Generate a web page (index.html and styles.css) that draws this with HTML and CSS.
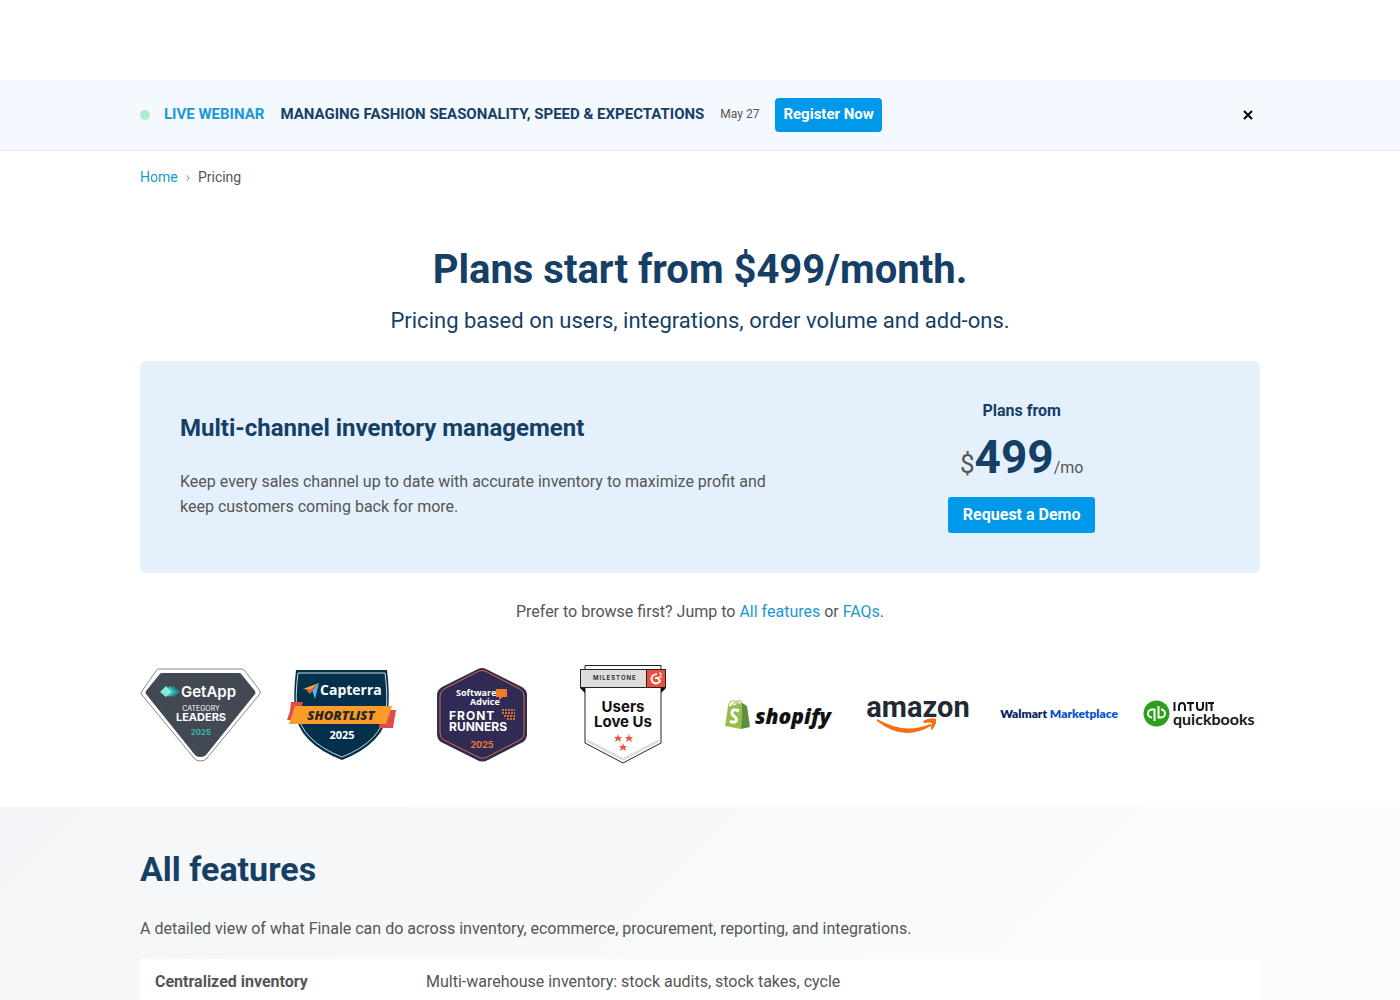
FILE: index.html
```html
<!DOCTYPE html>
<html lang="en">
<head>
  <meta charset="UTF-8">
  <meta name="viewport" content="width=device-width, initial-scale=1.0">
  <title>Pricing</title>
  <link rel="stylesheet" href="styles.css">
</head>
<body>
<header class="site-header"></header>

<aside class="webinar">
  <div class="container webinar-inner">
    <span class="dot"></span>
    <span class="webinar-label">LIVE WEBINAR</span>
    <strong class="webinar-title">MANAGING FASHION SEASONALITY, SPEED &amp; EXPECTATIONS</strong>
    <span class="webinar-date">May 27</span>
    <a href="#register" class="btn btn-small">Register Now</a>
    <button class="close" type="button" aria-label="Close">
      <svg viewBox="0 0 10 10"><path d="M1 1 9 9M9 1 1 9"/></svg>
    </button>
  </div>
</aside>

<main>
  <div class="container">
    <nav class="breadcrumb">
      <a href="#home">Home</a>
      <span class="sep">›</span>
      <span>Pricing</span>
    </nav>

    <div class="hero">
      <h1>Plans start from $499/month.</h1>
      <p>Pricing based on users, integrations, order volume and add-ons.</p>
    </div>

    <section class="plan">
      <div class="plan-text">
        <h2>Multi-channel inventory management</h2>
        <p>Keep every sales channel up to date with accurate inventory to maximize profit and keep customers coming back for more.</p>
      </div>
      <div class="plan-price">
        <div class="plan-from">Plans from</div>
        <div class="price"><span class="currency">$</span><strong>499</strong><span>/mo</span></div>
        <a href="#demo" class="btn">Request a Demo</a>
      </div>
    </section>

    <p class="jump">Prefer to browse first? Jump to <a href="#features">All features</a> or <a href="#faqs">FAQs</a>.</p>

    <div class="logos">
      <div class="logo-group">
        <!-- GetApp -->
        <svg viewBox="0 0 121 100" role="img" aria-label="GetApp Category Leaders 2025">
          <path d="M19 4H102Q104 4 105 6L120 26Q121 28 119 30L67 93Q65 96 61 96H60Q56 96 54 93L2 30Q0 28 2 26L16 6Q17 4 19 4Z" fill="#fff" stroke="#85888c" stroke-width="1"/>
          <path d="M22 8H99Q101 8 102 10L115 26Q116 28 115 29L66 90Q64 92 60 92Q57 92 55 90L6 29Q5 28 6 26L19 10Q20 8 22 8Z" fill="#424953"/>
          <path d="M33 21 40 27 33 32 28 27Z" fill="#248c8f"/>
          <path d="M30 21 36 27 30 32 24 27Z" fill="#30b8b3"/>
          <path d="M26 21 32 27 26 32 20 27Z" fill="#80ede0"/>
          <text class="inter semi" x="41" y="32" font-size="15" fill="#fff">GetApp</text>
          <text class="inter" x="61" y="46" font-size="7" fill="#fff" text-anchor="middle">CATEGORY</text>
          <text class="inter bold" x="61" y="56" font-size="11" fill="#fff" text-anchor="middle">LEADERS</text>
          <text class="inter semi" x="61" y="70" font-size="8" fill="#32c2bd" text-anchor="middle">2025</text>
        </svg>
        <!-- Capterra -->
        <svg viewBox="0 0 121 100" role="img" aria-label="Capterra Shortlist 2025">
          <path d="M15 5H106Q109 30 107 46Q104 78 61 95Q17 78 14 46Q12 30 15 5Z" fill="#04304b"/>
          <path d="M17 8H104Q107 31 105 46Q101 76 61 92Q20 76 16 46Q14 31 17 8Z" fill="none" stroke="#c8d9e2" stroke-width="1"/>
          <path d="M10 37H22L17 55H6L9 46ZM105 45H115L112 63H98L99 54Z" fill="#e04b4c"/>
          <path d="M14 41H111L105 59H8Z" fill="#fb9b29"/>
          <path d="M22 24 38 18 30 25Z" fill="#fba63b"/>
          <path d="M38 18 34 34 31 25Z" fill="#52b7e7"/>
          <path d="M25 25 34 23 29 29Z" fill="#e95745"/>
          <text class="open bold" x="39" y="30" font-size="14" fill="#fff">Capterra</text>
          <text class="open heavy" x="60" y="55" font-size="13" font-style="italic" fill="#272929" text-anchor="middle">SHORTLIST</text>
          <text class="open bold" x="61" y="74" font-size="11" fill="#fff" text-anchor="middle">2025</text>
        </svg>
        <!-- Software Advice -->
        <svg viewBox="0 0 121 100" role="img" aria-label="Software Advice Front Runners 2025">
          <path d="M56 4Q60 2 64 4L100 22Q105 25 105 30V69Q105 74 101 77L66 95Q60 98 55 95L19 77Q15 74 15 69V30Q15 25 20 22Z" fill="#302b54"/>
          <path d="M57 6Q60 5 63 6L98 24Q102 27 102 31V68Q102 73 98 75L65 92Q60 95 56 92L22 75Q18 73 18 68V31Q18 27 22 24Z" fill="none" stroke="#d96b3d" stroke-width="1"/>
          <text class="open bold" x="34" y="31" font-size="9" fill="#fff">Software</text>
          <text class="open bold" x="48" y="40" font-size="9" fill="#fff">Advice</text>
          <path d="M74 24H85V32H81L77 35V32H74Z" fill="#f17a27"/>
          <text class="inter bold" x="27" y="55" font-size="12" fill="#fff" letter-spacing="1">FRONT</text>
          <text class="inter bold" x="27" y="66" font-size="12" fill="#fff">RUNNERS</text>
          <path d="M80 45H93M80 48H93M82 51H93M85 54H93" stroke="#d66d37" stroke-width="2" stroke-dasharray="2 1"/>
          <text class="inter bold" x="60" y="83" font-size="9" fill="#f07a32" text-anchor="middle">2025</text>
        </svg>
        <!-- G2 -->
        <svg viewBox="0 0 121 100" role="img" aria-label="G2 Milestone Users Love Us">
          <path d="M22 0.5H98V78L60 98 22 78Z" fill="#fff" stroke="#222" stroke-width="1"/>
          <path d="M24 74 60 93 96 74V77L60 96 24 77Z" fill="#ddd"/>
          <path d="M17 23H22V28ZM103 23H98V28Z" fill="#111"/>
          <rect x="17.5" y="4.5" width="85" height="18" fill="#ddd" stroke="#222"/>
          <rect x="84" y="5" width="18" height="17" fill="#ef4d3d"/>
          <path d="M83.500 5V22" stroke="#222"/>
          <text class="inter semi" x="30" y="15" font-size="6" fill="#222" letter-spacing="1">MILESTONE</text>
          <path d="M94 9.500A4.500 4.500 0 1 0 97 16L95 13H92" fill="none" stroke="#fff" stroke-width="2"/>
          <path d="M96 8H98Q99 10 96 12H99" fill="none" stroke="#fff" stroke-width="1"/>
          <text class="inter bold" x="60" y="47" font-size="15" fill="#111" text-anchor="middle">Users</text>
          <text class="inter bold" x="60" y="62" font-size="15" fill="#111" text-anchor="middle">Love Us</text>
          <g fill="#f05442">
            <path id="star" d="M55 69 56 72H59L57 74 58 77 55 75 52 77 53 74 51 72H54Z"/>
            <use href="#star" x="11"/>
            <use href="#star" x="5" y="9"/>
          </g>
        </svg>
      </div>

      <div class="logo-group">
        <!-- Shopify -->
        <svg viewBox="0 0 121 100" role="img" aria-label="Shopify">
          <path d="M12 42Q14 33 20 37Q25 33 27 40" fill="none" stroke="#95bf47" stroke-width="1"/>
          <path d="M15 42Q18 35 23 40M20 41Q22 34 24 40" fill="none" stroke="#95bf47" stroke-width="1"/>
          <path d="M12 42 26 38 25 64 9 61Z" fill="#95bf47"/>
          <path d="M26 38 31 41 34 62 25 64Z" fill="#5e8e3e"/>
          <path d="M23 46Q16 43 16 48Q16 50 19 52Q22 55 19 57Q17 58 14 56" fill="none" stroke="#fff" stroke-width="3"/>
          <text class="open heavy" x="39" y="59" font-size="21" font-style="italic" fill="#111">shopify</text>
        </svg>
        <!-- Amazon -->
        <svg viewBox="0 0 121 100" role="img" aria-label="Amazon">
          <text class="roboto bold" x="61" y="52" font-size="29" fill="#202a35" text-anchor="middle">amazon</text>
          <path d="M20 54Q48 70 73 59Q75 59 74 61Q46 77 20 56Z" fill="#f36f10"/>
          <path d="M66 56Q74 52 79 54Q80 59 75 65Q73 65 75 58Q72 57 67 58Z" fill="#f36f10"/>
        </svg>
        <!-- Walmart -->
        <svg viewBox="0 0 121 100" role="img" aria-label="Walmart Marketplace">
          <text class="lato heavy" x="61" y="53" font-size="12" fill="#061e60" text-anchor="middle">Walmart <tspan fill="#0753ce">Marketplace</tspan></text>
        </svg>
        <!-- QuickBooks -->
        <svg viewBox="0 0 121 100" role="img" aria-label="Intuit QuickBooks">
          <circle cx="17.500" cy="48.500" r="13" fill="#2ca01c"/>
          <path d="M15.500 56V44.500H13A4 4 0 0 0 13 52.500M19.500 41V52.500H22A4 4 0 0 0 22 44.500" fill="none" stroke="#fff" stroke-width="2"/>
          <path d="M35.500 37V46M40 46V42Q40 38 43 38T46 42V46M48 38H55M51.500 38V46M58 37V42Q58 45 61 45T64 42V37M67.500 37V46M69 38H75M72.500 38V46" fill="none" stroke="#161616" stroke-width="2"/>
          <text class="lato bold" x="34" y="60" font-size="16" fill="#161616">quickbooks</text>
        </svg>
      </div>
    </div>
  </div>

  <section class="features" id="features">
    <div class="container">
      <h2>All features</h2>
      <p>A detailed view of what Finale can do across inventory, ecommerce, procurement, reporting, and integrations.</p>
      <table>
        <tr>
          <th scope="row">Centralized inventory</th>
          <td>Multi-warehouse inventory: stock audits, stock takes, cycle</td>
        </tr>
      </table>
    </div>
  </section>
</main>
</body>
</html>
```
FILE: styles.css
```css
* {
  margin: 0;
  padding: 0;
  box-sizing: border-box;
}

body {
  font-family: Roboto, "Liberation Sans", sans-serif;
  font-size: 16px;
  line-height: 25px;
  color: #555;
  background: #fff;
}

a {
  color: #1b98cf;
  text-decoration: none;
}

h1, h2 {
  color: #153f65;
}

.container {
  max-width: 1160px;
  margin: 0 auto;
  padding: 0 20px;
}

.site-header {
  height: 80px;
}

/* webinar bar */
.webinar {
  background: #f4f8ff;
  border-bottom: 1px solid #dce0e7;
}

.webinar-inner {
  display: flex;
  align-items: center;
  gap: 16px;
  padding-top: 18px;
  padding-bottom: 18px;
  font-size: 15px;
  line-height: 22px;
}

.webinar-inner > span,
.webinar-inner > strong {
  padding-bottom: 2px;
}

.webinar-inner > .dot {
  width: 10px;
  height: 10px;
  margin-right: -2px;
  border-radius: 50%;
  background: #b0eaca;
}

.webinar-label {
  color: #1b98d5;
  font-weight: 700;
}

.webinar-title {
  color: #153f65;
}

.webinar-date {
  font-size: 12px;
}

.btn {
  display: inline-block;
  padding: 5px 15px 6px;
  border-radius: 3px;
  background: #0099e9;
  color: #fff;
  font-weight: 700;
}

.btn-small {
  padding: 5px 8px 7px;
  border-radius: 4px;
}

.close {
  display: flex;
  margin-left: auto;
  padding: 7px;
  border: 0;
  background: none;
  cursor: pointer;
}

.close svg {
  width: 10px;
  height: 10px;
  fill: none;
  stroke: #000;
  stroke-width: 2;
}

.breadcrumb {
  display: flex;
  gap: 8px;
  padding-top: 14px;
  font-size: 14px;
}

.sep {
  color: #999;
}

.hero {
  padding: 55px 0 26px;
  text-align: center;
  color: #153f65;
}

.hero h1 {
  font-size: 40px;
  line-height: 50px;
}

.hero p {
  padding-top: 12px;
  font-size: 22px;
  line-height: 28px;
}

/* plan card */
.plan {
  display: grid;
  grid-template-columns: 11fr 7fr;
  gap: 20px;
  align-items: center;
  padding: 37px 40px 40px;
  border-radius: 6px;
  background: #e4f1fd;
}

.plan h2 {
  margin-bottom: 26px;
  font-size: 24px;
  line-height: 30px;
}

.plan-price {
  text-align: center;
}

.plan-from {
  color: #153f65;
  font-weight: 700;
}

.price {
  padding: 9px 0 4px;
  line-height: 50px;
}

.price strong {
  color: #153f65;
  font-size: 46px;
}

.currency {
  font-size: 26px;
}

.jump {
  padding: 26px 0 41px;
  text-align: center;
}

/* badges and partner logos */
.logos {
  display: flex;
  gap: 32px;
  padding-bottom: 42px;
}

.logo-group {
  display: grid;
  flex: 1;
  grid-template-columns: repeat(4, 1fr);
  gap: 20px;
}

.logo-group svg {
  display: block;
  width: 100%;
}

.inter { font-family: Inter, sans-serif; }
.open { font-family: "Open Sans", sans-serif; }
.lato { font-family: Lato, sans-serif; }
.roboto { font-family: Roboto, sans-serif; }
.semi { font-weight: 600; }
.bold { font-weight: 700; }
.heavy { font-weight: 800; }

.features {
  padding: 40px 0 60px;
  background: linear-gradient(135deg, #f3f5f8, #f8faf9 50%, #fcfcfc);
}

.features h2 {
  font-size: 34px;
  line-height: 44px;
}

.features p {
  padding: 25px 0 18px;
}

table {
  width: 100%;
  border-collapse: collapse;
  background: #fff;
}

th, td {
  padding: 10px 15px;
  text-align: left;
}

th {
  width: 271px;
  font-weight: 700;
}
```
